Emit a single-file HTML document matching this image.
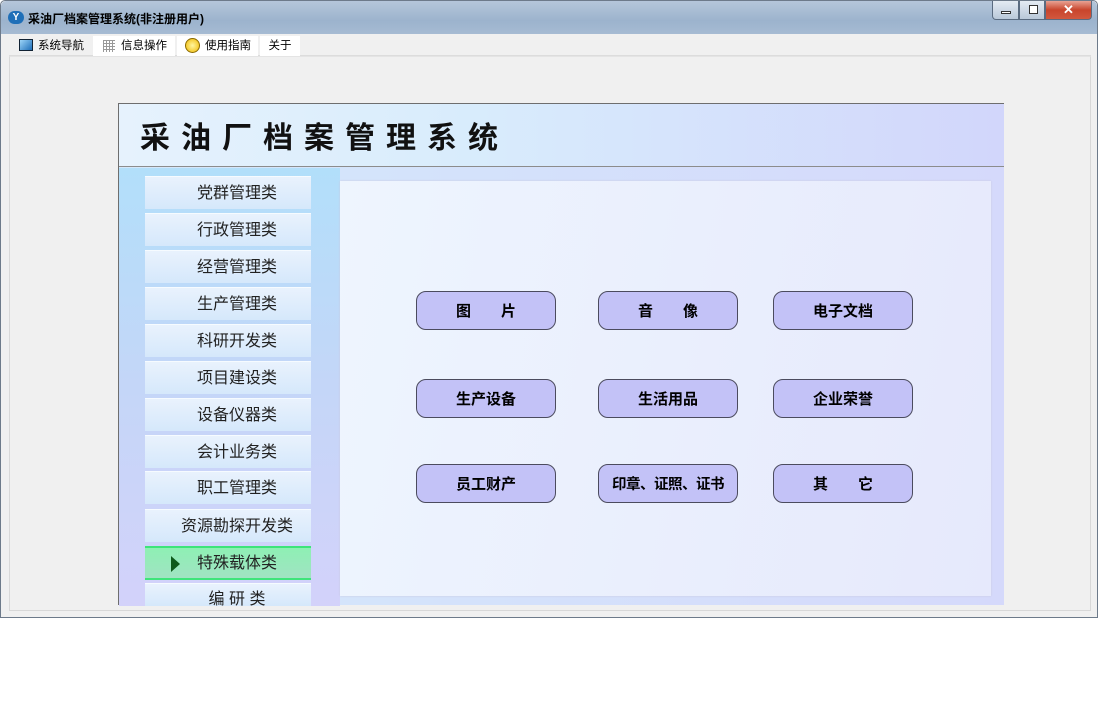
<!DOCTYPE html>
<html><head><meta charset="utf-8"><style>
*{margin:0;padding:0;box-sizing:border-box}
body{width:1098px;height:726px;background:#fff;position:relative;overflow:hidden;font-family:"Liberation Sans","Noto Sans CJK SC",sans-serif}
.win{position:absolute;left:0;top:0;width:1098px;height:618px;background:#f0f0f0;border:1px solid #6d7a8a;border-radius:5px 5px 0 0}
.title{position:absolute;left:0;top:0;width:1096px;height:33px;background:linear-gradient(#b5c6da,#9cb3cd 60%,#a6bbd3);border-radius:5px 5px 0 0}
.title span{position:absolute;left:27px;top:9px;font-size:12px;font-weight:bold;color:#000}
.logo{position:absolute;left:7px;top:10px;width:16px;height:13px;border-radius:7px;background:#1f6fb8;color:#fff;font-size:10px;font-weight:bold;text-align:center;line-height:13px}
.ctrl{position:absolute;top:0;height:19px;border:1px solid #5a6b80;border-top:none}
.menu{position:absolute;left:8px;top:33px;width:1082px;height:22px;background:#f0f0f0;border-bottom:1px solid #dcdcdc}
.mi{position:absolute;top:2px;height:20px;background:#fff;font-size:11.5px;line-height:20px}
.frame{position:absolute;left:8px;top:55px;width:1082px;height:555px;border:1px solid #d8d8d8;border-top:1px solid #e4e4e4}
.panel{position:absolute;left:118px;top:103px;width:886px;height:502px;background:linear-gradient(90deg,#d4e8fb,#d5d9fb);border-left:1px solid #6e6e6e;border-top:1px solid #6e6e6e}
.head{position:absolute;left:0;top:0;width:885px;height:63px;background:linear-gradient(90deg,#e6f2fd,#d8ecfc 40%,#d2d6fb);border-bottom:1px solid #8c8c8c}
.head span{position:absolute;left:21px;top:9px;font-size:30px;font-weight:bold;letter-spacing:11px;color:#111;font-family:"Noto Sans CJK SC",sans-serif}
.side{position:absolute;left:0;top:64px;width:221px;height:438px;background:linear-gradient(#b2dffa,#c4d6f8 50%,#d3d2fa)}
.it{position:absolute;left:26px;width:166px;height:33px;background:linear-gradient(#e9f2fd,#d5e8fb);border-top:1px solid #f6fbff;font-size:16px;color:#222;text-align:center;line-height:34px;padding-left:18px}
.sel{background:linear-gradient(#8ef0b4,#a0e3c2);border-top:2px solid #3ee47a;border-bottom:2px solid #3ee47a}
.main{position:absolute;left:221px;top:77px;width:651px;height:415px;background:linear-gradient(100deg,#eef5fe,#e6e9fc);box-shadow:0 0 2px #c8c8e0}
.b{position:absolute;width:140px;height:39px;background:#c3c2f7;border:1px solid #4b4b5e;border-radius:10px;font-size:15px;font-weight:bold;text-align:center;line-height:37px;color:#000;font-family:"Noto Sans CJK SC",sans-serif}
</style></head><body>
<div class="win">
<div class="title"><div class="logo">Y</div><span>采油厂档案管理系统(非注册用户)</span></div>
<div class="ctrl" style="left:991px;width:27px;background:linear-gradient(#e4ebf3,#b9c8d9);border-radius:0 0 0 4px"><div style="position:absolute;left:8px;top:10px;width:10px;height:3px;background:#fff;border:1px solid #333"></div></div>
<div class="ctrl" style="left:1018px;width:26px;background:linear-gradient(#e4ebf3,#b9c8d9)"><div style="position:absolute;left:9px;top:4px;width:9px;height:9px;border:1px solid #333;background:#fff"></div></div>
<div class="ctrl" style="left:1044px;width:47px;background:linear-gradient(#e8a293,#c8452c 50%,#d2583e);border-radius:0 0 4px 0;color:#fff;font-weight:bold;text-align:center;font-size:13px;line-height:18px">✕</div>
<div class="menu">
<div class="mi" style="left:4px;width:78px;background:transparent"><span style="position:absolute;left:6px;top:3px;width:14px;height:12px;border:1px solid #123;background:linear-gradient(135deg,#9cd4f8,#1e6eb8)"></span><span style="position:absolute;left:25px">系统导航</span></div>
<div class="mi" style="left:84px;width:82px"><span style="position:absolute;left:10px;top:4px;width:12px;height:12px;background:repeating-linear-gradient(90deg,#999 0 1px,transparent 1px 3px),repeating-linear-gradient(#999 0 1px,transparent 1px 3px)"></span><span style="position:absolute;left:28px">信息操作</span></div>
<div class="mi" style="left:168px;width:81px"><span style="position:absolute;left:8px;top:2px;width:15px;height:15px;border-radius:50%;background:radial-gradient(#fff6a0,#f0b800);border:1px solid #8a6a00"></span><span style="position:absolute;left:28px">使用指南</span></div>
<div class="mi" style="left:251px;width:40px;text-align:center">关于</div>
</div>
<div class="frame"></div>
</div>
<div class="panel">
<div class="head"><span>采油厂档案管理系统</span></div>
<div class="side">
<div class="it" style="top:8px">党群管理类</div>
<div class="it" style="top:45px">行政管理类</div>
<div class="it" style="top:82px">经营管理类</div>
<div class="it" style="top:119px">生产管理类</div>
<div class="it" style="top:156px">科研开发类</div>
<div class="it" style="top:193px">项目建设类</div>
<div class="it" style="top:230px">设备仪器类</div>
<div class="it" style="top:267px">会计业务类</div>
<div class="it" style="top:303px">职工管理类</div>
<div class="it" style="top:341px">资源勘探开发类</div>
<div class="it sel" style="top:378px;height:34px;line-height:31px"><span style="position:absolute;left:26px;top:8px;width:0;height:0;border-left:9px solid #0d5a1a;border-top:8px solid transparent;border-bottom:8px solid transparent"></span>特殊载体类</div>
<div class="it" style="top:415px;height:23px;overflow:hidden;line-height:32px">编 研 类</div>
</div>
<div class="main">
<div class="b" style="left:76px;top:110px">图&emsp;&emsp;片</div>
<div class="b" style="left:258px;top:110px">音&emsp;&emsp;像</div>
<div class="b" style="left:433px;top:110px">电子文档</div>
<div class="b" style="left:76px;top:198px">生产设备</div>
<div class="b" style="left:258px;top:198px">生活用品</div>
<div class="b" style="left:433px;top:198px">企业荣誉</div>
<div class="b" style="left:76px;top:283px">员工财产</div>
<div class="b" style="left:258px;top:283px;font-size:14.5px;letter-spacing:-0.5px">印章、证照、证书</div>
<div class="b" style="left:433px;top:283px">其&emsp;&emsp;它</div>
</div>
</div>
</body></html>
